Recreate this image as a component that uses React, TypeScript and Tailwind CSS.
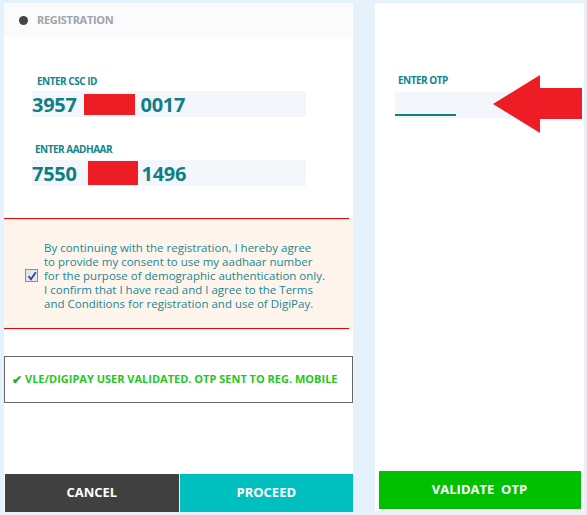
export default function App() {
  return (
    <div className="flex h-[515px] w-[587px] gap-[22px] bg-[#e6f2fb] pl-[4px] pt-[3px] font-['Open_Sans',sans-serif]">
      {/* left panel */}
      <div className="flex h-[509px] w-[349px] flex-col bg-white">
        <div className="flex h-[34px] items-center gap-[9px] bg-[#fbfbfb] pl-[15px]">
          <span className="h-[9px] w-[9px] rounded-full bg-[#444]" />
          <span className="text-[11px] font-bold tracking-[-0.3px] text-[#a0a4aa]">REGISTRATION</span>
        </div>

        <div className="pl-[28px] pt-[38px]">
          <div className="pl-[5px] text-[10px] font-bold leading-[12px] tracking-[-0.5px] text-[#10858c]">ENTER CSC ID</div>
          <div className="mt-[4px] flex h-[26px] w-[274px] items-center bg-[#f3f7fb] text-[20px] font-bold tracking-[-0.3px] text-[#0f7f86]">
            <span className="mt-[2px]">3957</span>
            <span className="ml-[7px] h-[21px] w-[51px] bg-[#ee1c25]" />
            <span className="ml-[6px] mt-[2px]">0017</span>
          </div>

          <div className="mt-[26px] pl-[3px] text-[10px] font-bold leading-[12px] tracking-[-0.5px] text-[#10858c]">ENTER AADHAAR</div>
          <div className="mt-[5px] flex h-[26px] w-[274px] items-center bg-[#f3f7fb] text-[20px] font-bold tracking-[-0.3px] text-[#0f7f86]">
            <span className="mt-[2px]">7550</span>
            <span className="ml-[11px] h-[24px] w-[50px] bg-[#ee1c25]" />
            <span className="ml-[4px] mt-[2px]">1496</span>
          </div>
        </div>

        <div className="mt-[32px] h-px w-[345px] bg-[#ee0000]" />
        <div className="flex h-[109px] items-center bg-[#fdf5ec] pl-[21px] pt-[4px]">
          <span className="flex h-[13px] w-[13px] items-center justify-center border border-[#8c8c96] bg-[#e4e6ee]">
            <svg width="10" height="10" viewBox="0 0 10 10">
              <path d="M1.5 5.2 L4 8.2 L8.8 1.2" fill="none" stroke="#34449a" strokeWidth="1.8" />
            </svg>
          </span>
          <p className="ml-[6px] text-[11.5px] leading-[14px] text-[#238594]">
            By continuing with the registration, I hereby agree
            <br />
            to provide my consent to use my aadhaar number
            <br />
            for the purpose of demographic authentication only.
            <br />
            I confirm that I have read and I agree to the Terms
            <br />
            and Conditions for registration and use of DigiPay.
          </p>
        </div>
        <div className="h-px w-[345px] bg-[#ee0000]" />

        <div className="mt-[27px] flex h-[47px] items-center border border-[#666] pl-[7px] text-[11px] font-bold text-[#1ec81e]">
          <span className="mr-[3px] text-[12px] text-[#2aa52a]">✔</span>
          VLE/DIGIPAY USER VALIDATED. OTP SENT TO REG. MOBILE
        </div>

        <div className="mt-auto flex h-[38px] gap-px pl-px">
          <button className="flex-1 bg-[#404040] text-[13px] font-bold text-white">CANCEL</button>
          <button className="flex-1 bg-[#00bfbf] text-[13px] font-bold text-white">PROCEED</button>
        </div>
      </div>

      {/* right panel */}
      <div className="flex h-[508px] w-[209px] flex-col bg-white pb-[2px]">
        <div className="relative pl-[20px] pt-[71px]">
          <div className="pl-[3px] text-[10px] font-bold leading-[12px] tracking-[-0.5px] text-[#10858c]">ENTER OTP</div>
          <div className="mt-[6px] flex h-[26px] w-[180px] items-end bg-[#f3f7fb]">
            <div className="mb-[2px] h-[2px] w-[61px] bg-[#0f8080]" />
          </div>
          <svg className="absolute left-[118px] top-[72px]" width="90" height="60" viewBox="0 0 90 60">
            <polygon points="0,29 47,0 47,13 89,13 89,44 47,44 47,58" fill="#ee1c25" />
          </svg>
        </div>
        <div className="mt-auto flex justify-center">
          <button className="h-[38px] w-[202px] bg-[#00c000] text-[13px] font-bold text-white">
            VALIDATE&nbsp; OTP
          </button>
        </div>
      </div>
    </div>
  );
}
